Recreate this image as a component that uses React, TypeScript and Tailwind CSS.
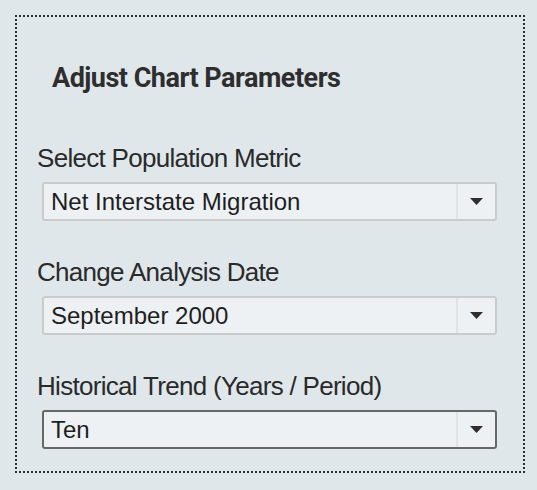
const fields = [
  { label: "Select Population Metric", value: "Net Interstate Migration", focused: false },
  { label: "Change Analysis Date", value: "September 2000", focused: false },
  { label: "Historical Trend (Years / Period)", value: "Ten", focused: true },
];

const Caret = () => (
  <svg width="13" height="7" viewBox="0 0 13 7" className="block">
    <path d="M0 0 H13 L6.5 7 Z" fill="#2e2e2e" />
  </svg>
);

const FakeSelect = ({ value, focused }: { value: string; focused: boolean }) => {
  const border = focused ? "border-[#686868]" : "border-[#c9cbcd]";
  return (
    <div
      className={`ml-[5px] flex h-[39px] w-[455px] items-stretch rounded-[3px] border-2 bg-[#edf1f4] ${border}`}
    >
      <div className="flex flex-1 items-center pl-[7px] font-['Liberation_Sans',Arial,sans-serif] text-[24px] leading-none text-[#1e1e1e]">
        {value}
      </div>
      <div className="flex w-[39px] items-center justify-center border-l-2 border-[#dfe3e6]">
        <Caret />
      </div>
    </div>
  );
};

const App = () => {
  return (
    <div className="h-[490px] w-[537px] bg-[#e0e7eb] p-[15px]">
      <div className="h-[458px] w-[510px] border-2 border-dotted border-[#2f2f2f] pl-[20px]">
        <h2 className="ml-[15px] mt-[46px] font-['Roboto',sans-serif] text-[27px] font-bold leading-[30px] tracking-[-0.5px] text-[#2e2e2e]">
          Adjust Chart Parameters
        </h2>
        <div className="mt-[50px] flex flex-col gap-[36px]">
          {fields.map((f) => (
            <div key={f.label} className="flex flex-col gap-[9px]">
              <label className="font-['Liberation_Sans',Arial,sans-serif] text-[26px] leading-[30px] tracking-[-0.7px] text-[#2a2a2a]">
                {f.label}
              </label>
              <FakeSelect value={f.value} focused={f.focused} />
            </div>
          ))}
        </div>
      </div>
    </div>
  );
};

export default App;
